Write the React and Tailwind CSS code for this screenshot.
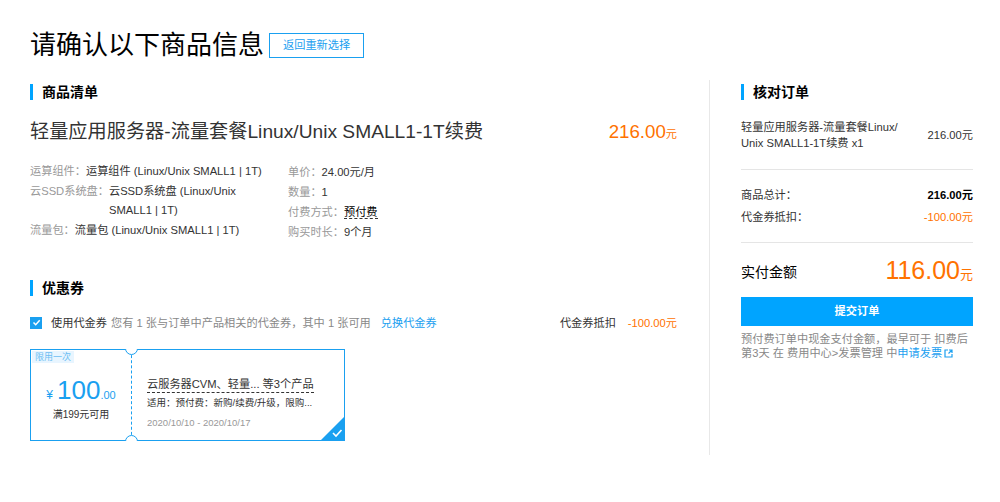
import React from 'react'

const font = "font-['Liberation_Sans','Noto_Sans_CJK_SC',sans-serif]"

function SectionTitle({ children }) {
  return (
    <div className="flex items-center h-[16px]">
      <span className="w-[3px] h-[16px] bg-[#00a4ff]" />
      <span className="ml-[9px] text-[14px] leading-[16px] font-bold text-[#000]">{children}</span>
    </div>
  )
}

function Detail({ label, children }) {
  return (
    <div className="flex">
      <span className="shrink-0 text-[#999]">{label}</span>
      <span className="text-[#333]">{children}</span>
    </div>
  )
}

function Coupon() {
  return (
    <div className="relative w-[315px] h-[92px] overflow-hidden mt-[16px]">
      <div className="flex h-full border border-[#1aa0f0]">
        <div className="w-[101px] border-r border-dashed border-[#1aa0f0] flex flex-col items-center pt-[27px]">
          <div className="flex items-baseline text-[#1aa0f0] leading-[26px]">
            <span className="text-[12px] mr-[4px]">¥</span>
            <span className="text-[26px]">100</span>
            <span className="text-[11px]">.00</span>
          </div>
          <div className="text-[10px] leading-[14px] text-[#333]">满199元可用</div>
        </div>
        <div className="flex-1 pl-[15px] pt-[21px]">
          <div className="inline-block text-[11.2px] leading-[15px] text-[#333] border-b border-dashed border-[#333]">
            云服务器CVM、轻量... 等3个产品
          </div>
          <div className="mt-[1px] text-[9.5px] leading-[14px] text-[#333] whitespace-nowrap">
            适用：预付费：新购/续费/升级，限购...
          </div>
          <div className="mt-[6px] text-[9.5px] leading-[14px] text-[#999]">2020/10/10 - 2020/10/17</div>
        </div>
      </div>
      <span className="absolute top-[2px] left-[2px] h-[12px] px-[3px] bg-[#e8f5ff] text-[9px] leading-[12px] text-[#6cbdf2]">
        限用一次
      </span>
      <span className="absolute top-[-7px] left-[95px] w-[13px] h-[13px] rounded-full border border-[#1aa0f0] bg-white" />
      <span className="absolute bottom-[-7px] left-[95px] w-[13px] h-[13px] rounded-full border border-[#1aa0f0] bg-white" />
      <svg className="absolute right-0 bottom-0" width="25" height="25" viewBox="0 0 25 25">
        <polygon points="25,0 25,25 0,25" fill="#1aa0f0" />
        <path d="M13 17 L16 20 L21.5 14" stroke="#fff" strokeWidth="1.6" fill="none" />
      </svg>
    </div>
  )
}

export default function App() {
  return (
    <div className={`${font} min-h-screen bg-white pl-[30px] pt-[30px]`}>
      <div className="flex items-center h-[30px]">
        <h1 className="text-[26px] leading-[30px] font-normal text-[#000]">请确认以下商品信息</h1>
        <button className="ml-[5px] h-[25px] px-[13px] border border-[#1aa0f0] text-[11.2px] text-[#1aa0f0]">
          返回重新选择
        </button>
      </div>

      <div className="flex mt-[20px]">
        <div className="w-[647px] pt-[4px]">
          <SectionTitle>商品清单</SectionTitle>
          <div className="flex items-baseline justify-between mt-[19px] leading-[26px]">
            <span className="text-[19.2px] text-[#333]">轻量应用服务器-流量套餐Linux/Unix SMALL1-1T续费</span>
            <span className="text-[#ff7200]">
              <span className="text-[18.7px]">216.00</span>
              <span className="text-[11.2px]">元</span>
            </span>
          </div>

          <div className="flex mt-[15px] text-[11.2px]">
            <div className="w-[240px] leading-[19.5px]">
              <Detail label="运算组件：">运算组件 (Linux/Unix SMALL1 | 1T)</Detail>
              <Detail label="云SSD系统盘：">云SSD系统盘 (Linux/Unix SMALL1 | 1T)</Detail>
              <Detail label="流量包：">流量包 (Linux/Unix SMALL1 | 1T)</Detail>
            </div>
            <div className="ml-[18px] leading-[20px]">
              <Detail label="单价：">24.00元/月</Detail>
              <Detail label="数量：">1</Detail>
              <Detail label="付费方式：">
                <span className="border-b border-dashed border-[#333] text-[#000]">预付费</span>
              </Detail>
              <Detail label="购买时长：">9个月</Detail>
            </div>
          </div>

          <div className="mt-[38px]">
            <SectionTitle>优惠券</SectionTitle>
          </div>

          <div className="flex items-center justify-between mt-[17px] h-[20px] text-[11.2px]">
            <div className="flex items-center">
              <span className="w-[12px] h-[12px] bg-[#1aa0f0] flex items-center justify-center">
                <svg width="9" height="9" viewBox="0 0 9 9">
                  <path d="M1.5 4.5 L3.7 6.7 L7.7 2.3" stroke="#fff" strokeWidth="1.5" fill="none" />
                </svg>
              </span>
              <span className="ml-[9px] text-[#333]">使用代金券</span>
              <span className="ml-[4px] text-[#888]">您有 1 张与订单中产品相关的代金券，其中 1 张可用</span>
              <span className="ml-[10px] text-[#1aa0f0]">兑换代金券</span>
            </div>
            <div className="flex items-center">
              <span className="text-[#333]">代金券抵扣</span>
              <span className="ml-[12px] text-[#ff7200]">-100.00元</span>
            </div>
          </div>

          <Coupon />
        </div>

        <div className="ml-[32px] border-l border-[#e8e8e8] pl-[31px] w-[264px] h-[375px] pt-[4px]">
          <SectionTitle>核对订单</SectionTitle>
          <div className="flex items-center justify-between mt-[19px] text-[11.2px] text-[#333]">
            <span className="w-[170px] leading-[16px]">
              轻量应用服务器-流量套餐Linux/<wbr />Unix SMALL1-1T续费 x1
            </span>
            <span>216.00元</span>
          </div>
          <div className="mt-[18px] h-px bg-[#e5e5e5]" />
          <div className="mt-[14px] text-[11.2px] leading-[22px]">
            <div className="flex justify-between">
              <span className="text-[#333]">商品总计：</span>
              <span className="font-bold text-[#000]">216.00元</span>
            </div>
            <div className="flex justify-between">
              <span className="text-[#333]">代金券抵扣：</span>
              <span className="text-[#ff7200]">-100.00元</span>
            </div>
          </div>
          <div className="mt-[14px] h-px bg-[#e5e5e5]" />
          <div className="flex items-center justify-between mt-[12px] h-[34px]">
            <span className="text-[14px] text-[#000]">实付金额</span>
            <span className="text-[#ff7200] leading-[30px]">
              <span className="text-[25px]">116.00</span>
              <span className="text-[13px]">元</span>
            </span>
          </div>
          <button className="mt-[8px] w-full h-[29px] bg-[#00a4ff] text-white text-[11.2px] font-bold">提交订单</button>
          <p className="mt-[6px] text-[11.2px] leading-[14px] text-[#888]">
            预付费订单中现金支付金额，最早可于 扣费后 第3天 在 费用中心&gt;发票管理 中<span className="text-[#1aa0f0]">申请发票</span>
            <svg className="inline-block ml-[2px] align-[-1px]" width="9" height="9" viewBox="0 0 9 9">
              <path d="M4 1 H1 V8 H8 V5" stroke="#1aa0f0" strokeWidth="1.2" fill="none" />
              <path d="M5 1 H8 V4 M8 1 L4.5 4.5" stroke="#1aa0f0" strokeWidth="1.2" fill="none" />
            </svg>
          </p>
        </div>
      </div>
    </div>
  )
}
